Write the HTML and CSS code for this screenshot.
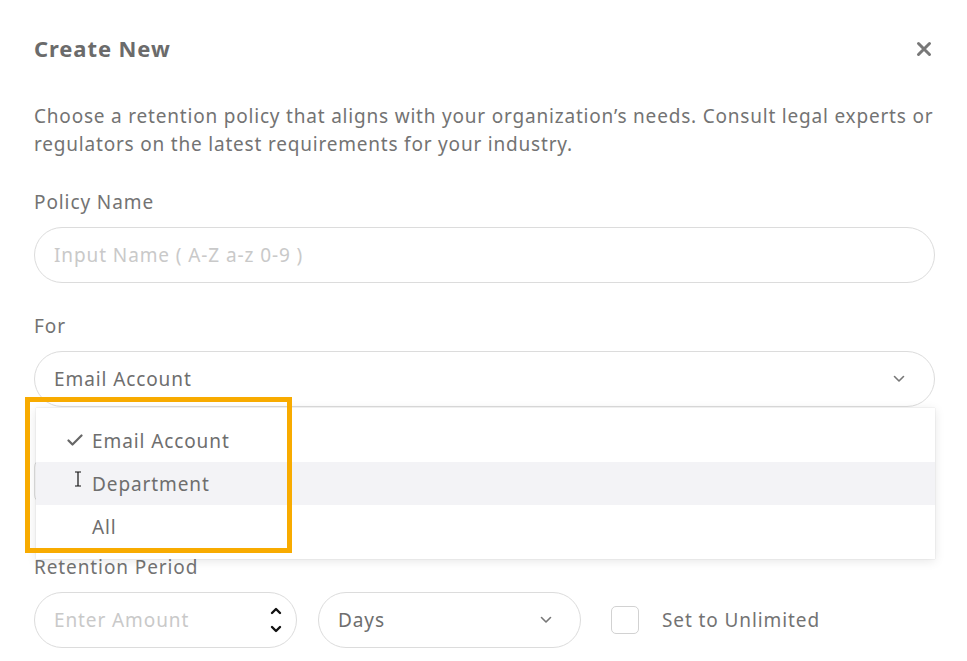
FILE: index.html
```html
<!DOCTYPE html>
<html lang="en">
<head>
<meta charset="utf-8">
<title>Create New</title>
<link rel="stylesheet" href="styles.css">
</head>
<body>
<div class="modal">
  <div class="header">
    <h1 class="title">Create New</h1>
    <svg class="close" width="16" height="16" viewBox="0 0 16 16"><path d="M2.5 2.5 L13.5 13.5 M13.5 2.5 L2.5 13.5" stroke="#787878" stroke-width="3" stroke-linecap="round"/></svg>
  </div>
  <p class="intro">Choose a retention policy that aligns with your organization’s needs. Consult legal experts or regulators on the latest requirements for your industry.</p>

  <div class="label">Policy Name</div>
  <div class="field"><span class="placeholder">Input Name ( A-Z a-z 0-9 )</span></div>

  <div class="label gap">For</div>
  <div class="field select-wrap">
    <span class="value">Email Account</span>
    <svg class="chev" width="12" height="8" viewBox="0 0 12 8"><path d="M1.5 1.5 L6 6 L10.5 1.5" fill="none" stroke="#777" stroke-width="1.6" stroke-linecap="round" stroke-linejoin="round"/></svg>

    <div class="menu">
      <div class="item"><svg class="check" width="16" height="12" viewBox="0 0 16 12"><path d="M1.5 6.5 L5.5 10.5 L14.5 1.5" fill="none" stroke="#666" stroke-width="2.2" stroke-linecap="round" stroke-linejoin="round"/></svg><span>Email Account</span></div>
      <div class="item hover"><svg class="ibeam" width="8" height="16" viewBox="0 0 8 16"><path d="M1 1 H7 M4 1 V15 M1 15 H7" fill="none" stroke="#111" stroke-width="1.2"/></svg><span>Department</span></div>
      <div class="item"><span>All</span></div>
    </div>
    <div class="highlight"></div>
  </div>

  <div class="hidden-group">
    <div class="field under"></div>
  </div>

  <div class="label">Retention Period</div>
  <div class="row">
    <div class="field small">
      <span class="placeholder">Enter Amount</span>
      <svg class="spin" width="14" height="30" viewBox="0 0 14 30"><path d="M3 8 L7 4 L11 8 M3 22 L7 26 L11 22" fill="none" stroke="#111" stroke-width="2.4" stroke-linecap="round" stroke-linejoin="round"/></svg>
    </div>
    <div class="field small select-wrap">
      <span class="value">Days</span>
      <svg class="chev" width="12" height="8" viewBox="0 0 12 8"><path d="M1.5 1.5 L6 6 L10.5 1.5" fill="none" stroke="#777" stroke-width="1.6" stroke-linecap="round" stroke-linejoin="round"/></svg>
    </div>
    <label class="unlimited"><span class="box"></span><span>Set to Unlimited</span></label>
  </div>
</div>
</body>
</html>
```

FILE: styles.css
```css
* { box-sizing: border-box; }
html, body { margin: 0; padding: 0; background: #fff; }
body {
  font-family: "Noto Sans", "Open Sans", sans-serif;
  color: #707070;
  font-size: 19px;
  letter-spacing: 0.9px;
}
.modal {
  padding: 34px 32px 0 34px;
  width: 967px;
}
.header {
  display: flex;
  justify-content: space-between;
  align-items: center;
  height: 28px;
}
.title {
  margin: 0;
  font-size: 22px;
  font-weight: 700;
  color: #6b6b6b;
  line-height: 28px;
  letter-spacing: 0.9px;
}
.close { margin-right: 3px; margin-top: 1px; }
.intro {
  margin: 40px 0 0;
  line-height: 28px;
  color: #737373;
  letter-spacing: 0.8px;
}
.label {
  margin-top: 30px;
  line-height: 28px;
  color: #737373;
}
.label.gap { margin-top: 29px; }
.field {
  margin-top: 11px;
  height: 56px;
  border: 1px solid #dcdcdc;
  border-radius: 28px;
  display: flex;
  align-items: center;
  padding: 0 19px;
  position: relative;
  background: #fff;
}
.placeholder { color: #c9c9c9; }
.value { color: #6e6e6e; }
.select-wrap { justify-content: space-between; }
.chev { margin-right: 10px; }
.menu {
  position: absolute;
  left: 1px;
  top: 56px;
  width: 899px;
  height: 151px;
  background: #fff;
  box-shadow: 0 2px 10px rgba(0,0,0,0.10), 0 0 1px rgba(0,0,0,0.2);
  padding: 11px 0 8px;
  z-index: 3;
}
.item {
  height: 43px;
  display: flex;
  align-items: center;
  padding-left: 56px;
  position: relative;
  color: #6e6e6e;
}
.item.hover { background: #f3f3f6; }
.check { position: absolute; left: 31px; top: 15px; }
.ibeam { position: absolute; left: 38px; top: 9px; }
.highlight {
  position: absolute;
  left: -10px;
  top: 45px;
  width: 267px;
  height: 156px;
  border: 5px solid #f8ab00;
  z-index: 4;
}
.hidden-group { height: 116px; padding-top: 52px; }
.hidden-group .under {
  margin-top: 0;
  height: 44px;
  border-radius: 8px;
}
.row {
  display: flex;
  align-items: center;
  gap: 21px;
  margin-top: 11px;
}
.row .field { margin-top: 0; }
.small { width: 263px; }
.spin { position: absolute; right: 13px; top: 12px; }
.row .chev { margin-right: 9px; }
.unlimited {
  display: flex;
  align-items: center;
  margin-left: 9px;
  color: #737373;
}
.box {
  width: 28px;
  height: 28px;
  border: 1px solid #d2d2d2;
  border-radius: 5px;
  margin-right: 23px;
}
```
